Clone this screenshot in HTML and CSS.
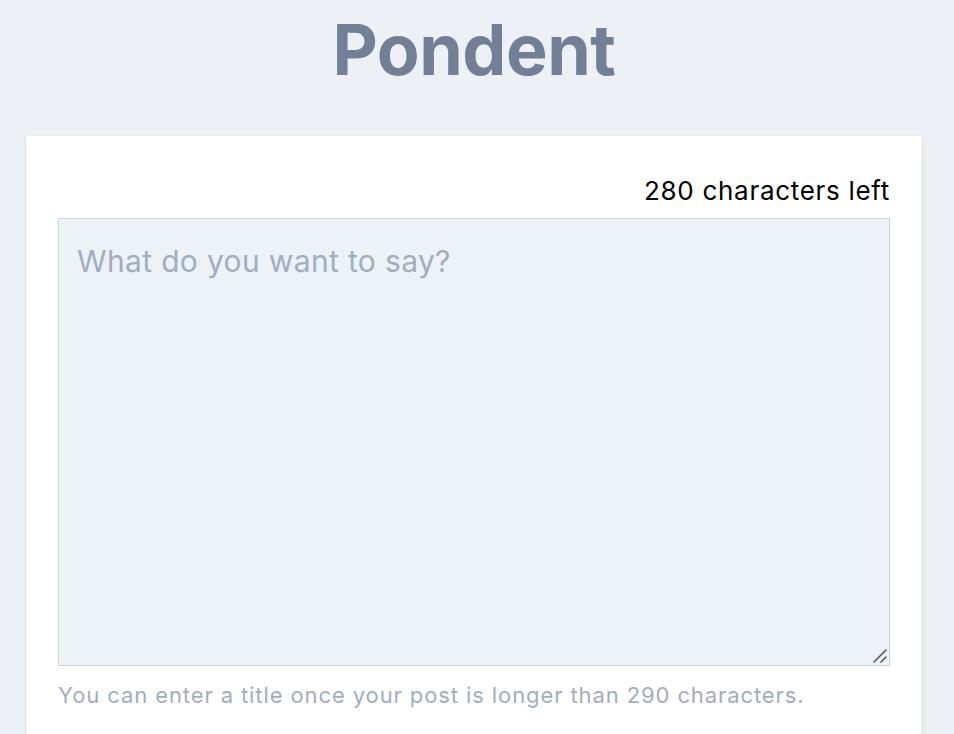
FILE: index.html
```html
<!DOCTYPE html>
<html lang="en">
<head>
<meta charset="utf-8">
<title>Pondent</title>
<link rel="stylesheet" href="styles.css">
</head>
<body>
<main class="page">
  <h1 class="brand">Pondent</h1>
  <section class="card">
    <div class="counter">280 characters left</div>
    <div class="field">
      <textarea class="editor" placeholder="What do you want to say?"></textarea>
      <svg class="grip" width="16" height="16" viewBox="0 0 16 16" aria-hidden="true">
        <rect x="0" y="0" width="16" height="16" fill="#edf2f7"/>
        <line x1="2" y1="14" x2="14" y2="2" stroke="#555" stroke-width="1.6" stroke-linecap="round"/>
        <line x1="9" y1="14" x2="14" y2="9" stroke="#555" stroke-width="1.6" stroke-linecap="round"/>
      </svg>
    </div>
    <p class="hint">You can enter a title once your post is longer than 290 characters.</p>
  </section>
</main>
</body>
</html>
```

FILE: styles.css
```css
html, body {
  margin: 0;
  padding: 0;
  background: #edf0f5;
  font-family: Inter, "Noto Sans", sans-serif;
}
.page {
  padding: 0 32px 0 26px;
  display: flex;
  flex-direction: column;
  align-items: stretch;
}
.brand {
  margin: 7px 0 0;
  height: 129px;
  text-align: center;
  font-size: 70px;
  font-weight: 700;
  line-height: 86px;
  color: #718096;
  letter-spacing: -0.5px;
}
.card {
  background: #ffffff;
  box-shadow: 0 1px 3px rgba(0, 0, 0, 0.1), 0 1px 2px rgba(0, 0, 0, 0.06);
  padding: 32px 32px 40px;
}
.counter {
  text-align: right;
  font-size: 26px;
  line-height: 46px;
  letter-spacing: 0.7px;
  color: #000;
  margin-bottom: 4px;
}
.field {
  position: relative;
}
.editor {
  display: block;
  box-sizing: border-box;
  width: 100%;
  height: 448px;
  margin: 0;
  padding: 21px 18px 12px;
  background: #edf2f7;
  border: 1px solid #cbd5e0;
  border-radius: 0;
  font-family: Inter, "Noto Sans", sans-serif;
  font-size: 30px;
  line-height: 42px;
  letter-spacing: 0.35px;
  color: #2d3748;
  outline: none;
}
.editor::placeholder {
  color: #a0aec0;
}
.grip {
  position: absolute;
  right: 2px;
  bottom: 2px;
  pointer-events: none;
}
.hint {
  margin: 13px 0 0;
  font-size: 22px;
  line-height: 32px;
  letter-spacing: 0.9px;
  color: #a0aec0;
}
```
